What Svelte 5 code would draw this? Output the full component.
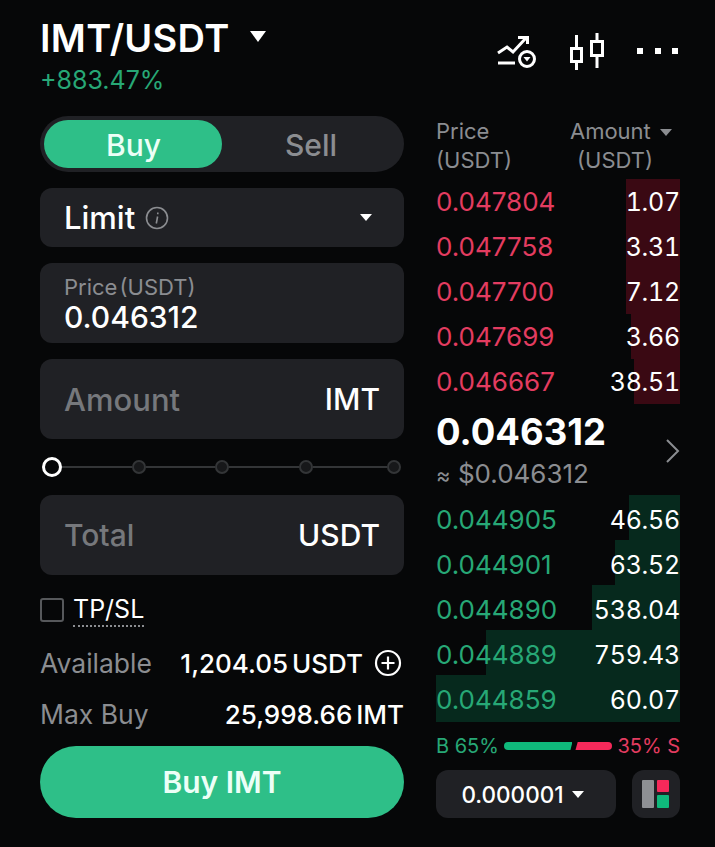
<script>
	const asks = [
		{ price: '0.047804', amount: '1.07', depth: 54 },
		{ price: '0.047758', amount: '3.31', depth: 54 },
		{ price: '0.047700', amount: '7.12', depth: 54 },
		{ price: '0.047699', amount: '3.66', depth: 49 },
		{ price: '0.046667', amount: '38.51', depth: 46 }
	];
	const bids = [
		{ price: '0.044905', amount: '46.56', depth: 51 },
		{ price: '0.044901', amount: '63.52', depth: 65 },
		{ price: '0.044890', amount: '538.04', depth: 88 },
		{ price: '0.044889', amount: '759.43', depth: 194 },
		{ price: '0.044859', amount: '60.07', depth: 244 }
	];
	const ticks = [1, 2, 3, 4];
</script>

<main class="page">
	<header class="top">
		<div>
			<div class="pair">
				<h1>IMT/USDT</h1>
				<span class="caret big"></span>
			</div>
			<div class="change">+883.47%</div>
		</div>
		<div class="tools">
			<svg width="40" height="36" viewBox="0 0 40 36" fill="none" stroke="#fff" stroke-width="3">
				<path d="M1 20 10 14 16 19 29 5M21 4.500H30.500V11" />
				<path d="M1 30H18" />
				<circle cx="30" cy="26" r="7.500" />
				<path d="M26.500 24H33.500L30 28.500Z" fill="#fff" stroke="none" />
			</svg>
			<svg width="34" height="39" viewBox="0 0 34 39" fill="none" stroke="#fff" stroke-width="3">
				<rect x="1.500" y="16.500" width="10" height="13" />
				<path d="M6.500 3V16.500M6.500 29.500V38" />
				<rect x="21.500" y="9.500" width="11" height="14" />
				<path d="M27 1V9.500M27 23.500V36" />
			</svg>
			<div class="dots"><i></i><i></i><i></i></div>
		</div>
	</header>

	<div class="columns">
		<section class="form">
			<div class="toggle">
				<button class="side active">Buy</button>
				<button class="side">Sell</button>
			</div>
			<div class="field select">
				<span class="value wide">Limit</span>
				<svg class="info" width="24" height="24" viewBox="0 0 24 24" fill="none" stroke="#8b8d91" stroke-width="1.600">
					<circle cx="12" cy="12" r="10.500" />
					<path d="M12.800 6.500V8.200M12.600 10.500 11.300 17.500" />
				</svg>
				<span class="caret small push"></span>
			</div>
			<div class="field price">
				<span class="label">Price (USDT)</span>
				<span class="value">0.046312</span>
			</div>
			<div class="field input">
				<span class="placeholder">Amount</span>
				<span class="value">IMT</span>
			</div>
			<div class="slider">
				<span class="thumb"></span>
				{#each ticks as t}
					<span class="line"></span>
					<span class="tick"></span>
				{/each}
			</div>
			<div class="field input">
				<span class="placeholder total">Total</span>
				<span class="value">USDT</span>
			</div>
			<label class="tpsl">
				<span class="box"></span>
				<span class="tp">TP/SL</span>
			</label>
			<div class="row available">
				<span>Available</span>
				<span class="amount">1,204.05 USDT
					<svg width="28" height="28" viewBox="0 0 28 28" fill="none" stroke="#fff" stroke-width="2.200">
						<circle cx="14" cy="14" r="12" />
						<path d="M14 7.500V20.500M7.500 14H20.500" />
					</svg>
				</span>
			</div>
			<div class="row maxbuy">
				<span>Max Buy</span>
				<span class="amount">25,998.66 IMT</span>
			</div>
			<button class="submit">Buy IMT</button>
		</section>

		<aside class="book">
			<div class="book-head">
				<div>Price<br />(USDT)</div>
				<div class="right">
					<div class="amt">Amount <span class="caret grey"></span></div>
					<div class="usdt">(USDT)</div>
				</div>
			</div>

			<div class="rows">
				{#each asks as r}
					<div class="level ask">
						<span class="bar" style="width: {r.depth}px"></span>
						<span class="p">{r.price}</span>
						<span class="a">{r.amount}</span>
					</div>
				{/each}
			</div>

			<div class="mid">
				<div>
					<div class="last">0.046312</div>
					<div class="usd"><span class="approx">≈</span> $0.046312</div>
				</div>
				<svg width="16" height="26" viewBox="0 0 16 26" fill="none" stroke="#8b8d91" stroke-width="2"><path d="M2 2 13 13 2 24" /></svg>
			</div>

			<div class="rows">
				{#each bids as r}
					<div class="level bid">
						<span class="bar" style="width: {r.depth}px"></span>
						<span class="p">{r.price}</span>
						<span class="a">{r.amount}</span>
					</div>
				{/each}
			</div>

			<div class="ratio">
				<span class="g">B 65%</span>
				<div class="meter"><span class="mg"></span><span class="mr"></span></div>
				<span class="r">35% S</span>
			</div>

			<div class="book-foot">
				<button class="tick-size">0.000001 <span class="caret small"></span></button>
				<button class="layout">
					<svg width="28" height="28" viewBox="0 0 28 28">
						<rect x="0" y="0" width="12" height="28" rx="1" fill="#8e9094" />
						<rect x="15" y="0" width="12" height="12" rx="1" fill="#f6295a" />
						<rect x="15" y="15" width="12" height="13" rx="1" fill="#0fb97b" />
					</svg>
				</button>
			</div>
		</aside>
	</div>
</main>

<style>
	:global(body) {
		background: #060708;
	}
	.page {
		height: 847px;
		box-sizing: border-box;
		padding: 15px 35px 0 40px;
		font-family: Inter, "Liberation Sans", sans-serif;
		color: #fff;
		background: #060708;
		overflow: hidden;
	}
	button {
		font-family: inherit;
		border: 0;
		color: inherit;
		padding: 0;
	}
	.top {
		display: flex;
		justify-content: space-between;
		height: 101px;
	}
	.pair {
		display: flex;
		align-items: center;
		gap: 20px;
	}
	h1 {
		margin: 0;
		font-size: 38px;
		line-height: 46px;
		font-weight: 600;
		letter-spacing: 0.3px;
	}
	.caret {
		display: inline-block;
		width: 0;
		height: 0;
		border-left: 6px solid transparent;
		border-right: 6px solid transparent;
		border-top: 7px solid #fff;
	}
	.caret.big {
		border-left-width: 8px;
		border-right-width: 8px;
		border-top-width: 11px;
		margin-top: -3px;
	}
	.caret.grey {
		border-top-color: #8b8d91;
		vertical-align: 3px;
		margin-left: 3px;
	}
	.change {
		font-size: 25px;
		line-height: 30px;
		color: #27a876;
		margin-top: 4px;
	}
	.tools {
		display: flex;
		align-items: center;
		gap: 33px;
		height: 72px;
		margin-right: 2px;
	}
	.dots {
		display: flex;
		gap: 11.500px;
	}
	.dots i {
		width: 6px;
		height: 6px;
		background: #fff;
	}
	.columns {
		display: flex;
		justify-content: space-between;
	}
	.form {
		width: 364px;
		display: flex;
		flex-direction: column;
		gap: 16px;
	}
	.toggle {
		height: 56px;
		box-sizing: border-box;
		padding: 4px;
		border-radius: 28px;
		background: #202125;
		display: flex;
	}
	.side {
		flex: 1;
		background: none;
		border-radius: 24px;
		font-size: 30px;
		color: #8b8d91;
		font-weight: 500;
		padding-top: 1px;
	}
	.side.active {
		flex: 0 0 178px;
		background: #2ebf88;
		color: #ecfff7;
		padding-left: 1px;
	}
	.field {
		background: #202125;
		border-radius: 12px;
		padding: 0 24px;
		display: flex;
		align-items: center;
		box-sizing: border-box;
	}
	.select {
		height: 59px;
		gap: 10px;
	}
	.push {
		margin-left: auto;
		margin-right: 8px;
	}
	.value {
		font-size: 30px;
		font-weight: 500;
	}
	.value.wide {
		font-size: 31px;
	}
	.price {
		height: 80px;
		flex-direction: column;
		align-items: flex-start;
		justify-content: center;
		padding-top: 3px;
	}
	.price .label {
		font-size: 22px;
		line-height: 25px;
		color: #8b8d91;
		word-spacing: -4px;
	}
	.price .value {
		line-height: 34px;
	}
	.input {
		height: 80px;
		justify-content: space-between;
	}
	.placeholder {
		font-size: 31px;
		font-weight: 500;
		color: #76787c;
	}
	.placeholder.total {
		font-size: 30px;
	}
	.slider {
		height: 24px;
		display: flex;
		align-items: center;
		padding: 0 3px 0 2px;
	}
	.thumb {
		flex: none;
		width: 14px;
		height: 14px;
		border: 3px solid #fff;
		border-radius: 50%;
		background: #060708;
	}
	.line {
		flex: 1;
		height: 2px;
		background: #333537;
	}
	.line:nth-last-child(2) {
		flex: 1.060;
	}
	.tick {
		flex: none;
		width: 10px;
		height: 10px;
		border: 2px solid #333537;
		border-radius: 50%;
		background: #17181a;
	}
	.tpsl {
		display: flex;
		align-items: center;
		gap: 9px;
		margin-top: -1px;
		height: 40px;
	}
	.box {
		width: 20px;
		height: 20px;
		border: 2px solid #56585b;
		border-radius: 3px;
	}
	.tp {
		font-size: 25px;
		line-height: 32px;
		border-bottom: 2px dotted #8b8d91;
	}
	.row {
		display: flex;
		justify-content: space-between;
		align-items: center;
		font-size: 26.500px;
		color: #8b8d91;
		height: 32px;
	}
	.available {
		margin-top: 1px;
	}
	.maxbuy {
		margin-top: 3px;
	}
	.amount {
		color: #fff;
		display: flex;
		align-items: center;
		gap: 11px;
		font-size: 26px;
		font-weight: 500;
		word-spacing: -3px;
	}
	.amount svg {
		margin-right: 2px;
	}
	.submit {
		height: 72px;
		border-radius: 36px;
		background: #2ebf88;
		color: #ecfff7;
		font-size: 30px;
		font-weight: 600;
	}
	.book {
		width: 244px;
	}
	.book-head {
		display: flex;
		justify-content: space-between;
		font-size: 22px;
		line-height: 29px;
		color: #8b8d91;
		height: 62px;
		padding-top: 1px;
	}
	.right {
		text-align: right;
	}
	.amt {
		margin-right: 8px;
	}
	.usdt {
		margin-right: 27px;
	}
	.level {
		position: relative;
		height: 45px;
		display: flex;
		justify-content: space-between;
		align-items: center;
		font-size: 26px;
	}
	.bar {
		position: absolute;
		right: 0;
		top: 0;
		bottom: 0;
	}
	.ask .bar {
		background: #3a0913;
	}
	.bid .bar {
		background: #06291d;
		top: -2px;
		bottom: 2px;
	}
	.bid:last-child .bar {
		bottom: 0;
	}
	.p,
	.a {
		position: relative;
	}
	.a {
		font-size: 25px;
		letter-spacing: -0.250px;
		font-variant-numeric: tabular-nums;
	}
	.ask .p {
		color: #e33c60;
	}
	.bid .p {
		color: #27a876;
	}
	.mid {
		height: 93px;
		display: flex;
		justify-content: space-between;
		align-items: center;
		margin-right: -1px;
	}
	.last {
		font-size: 36.500px;
		font-weight: 700;
		line-height: 44px;
		margin-top: -1px;
	}
	.usd {
		font-size: 26px;
		line-height: 30px;
		color: #8b8d91;
		margin-top: 5px;
	}
	.approx {
		font-size: 22px;
	}
	.ratio {
		display: flex;
		align-items: center;
		justify-content: space-between;
		height: 48px;
		font-size: 20px;
	}
	.g {
		color: #27a876;
	}
	.r {
		color: #e33c60;
	}
	.meter {
		flex: 1;
		display: flex;
		height: 8px;
		gap: 3px;
		margin: 0 5px;
	}
	.mg {
		flex: 65;
		background: #0fb97b;
		border-radius: 4px 0 0 4px;
		clip-path: polygon(0 0, 100% 0, 97% 100%, 0 100%);
	}
	.mr {
		flex: 35;
		background: #f6295a;
		border-radius: 0 4px 4px 0;
		clip-path: polygon(6% 0, 100% 0, 100% 100%, 0 100%);
	}
	.book-foot {
		display: flex;
		justify-content: space-between;
	}
	.tick-size {
		width: 180px;
		height: 48px;
		box-sizing: border-box;
		padding-right: 7px;
		background: #202125;
		border-radius: 12px;
		font-size: 22.500px;
		font-weight: 500;
		display: flex;
		align-items: center;
		justify-content: center;
		gap: 8px;
	}
	.layout {
		width: 48px;
		height: 48px;
		background: #202125;
		border-radius: 12px;
		display: flex;
		align-items: center;
		justify-content: center;
	}
</style>
